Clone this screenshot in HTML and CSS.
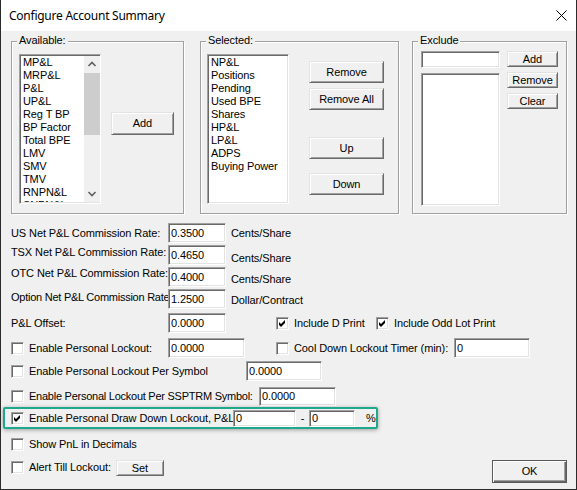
FILE: index.html
```html
<!DOCTYPE html>
<html>
<head>
<meta charset="utf-8">
<title>Configure Account Summary</title>
<link rel="stylesheet" href="styles.css">
</head>
<body>
<div class="window">
  <div class="titlebar">
    <span class="title">Configure Account Summary</span>
    <svg class="close" width="11" height="11" viewBox="0 0 11 11"><path d="M0.5 0.5L10.5 10.5M10.5 0.5L0.5 10.5" stroke="#000" stroke-width="1" fill="none"/></svg>
  </div>
  <div class="client">
    <div class="groups">
      <div class="group g-avail">
        <span class="legend">Available:</span>
        <div class="listbox lb-main">
          <div class="items">
            <div>MP&amp;L</div><div>MRP&amp;L</div><div>P&amp;L</div><div>UP&amp;L</div><div>Reg T BP</div><div>BP Factor</div><div>Total BPE</div><div>LMV</div><div>SMV</div><div>TMV</div><div>RNPN&amp;L</div><div>SNPN&amp;L</div>
          </div>
          <div class="scrollbar">
            <div class="sb-btn"><svg width="16" height="17" viewBox="0 0 16 17"><polyline points="4.5,10 8,6.5 11.5,10" fill="none" stroke="#606060" stroke-width="1.6"/></svg></div>
            <div class="sb-thumb"></div>
            <div class="sb-track"></div>
            <div class="sb-btn"><svg width="16" height="17" viewBox="0 0 16 17"><polyline points="4.5,7 8,10.5 11.5,7" fill="none" stroke="#606060" stroke-width="1.6"/></svg></div>
          </div>
        </div>
        <button class="btn btn-add">Add</button>
      </div>

      <div class="group g-sel">
        <span class="legend">Selected:</span>
        <div class="listbox lb-main">
          <div class="items">
            <div>NP&amp;L</div><div>Positions</div><div>Pending</div><div>Used BPE</div><div>Shares</div><div>HP&amp;L</div><div>LP&amp;L</div><div>ADPS</div><div>Buying Power</div>
          </div>
        </div>
        <div class="sel-btns">
          <button class="btn btn-sel">Remove</button>
          <button class="btn btn-sel b-rall">Remove All</button>
          <button class="btn btn-sel b-up">Up</button>
          <button class="btn btn-sel b-down">Down</button>
        </div>
      </div>

      <div class="group g-excl">
        <span class="legend">Exclude</span>
        <div class="excl-col">
          <input class="edit e-excl" type="text" value="">
          <div class="listbox lb-excl"></div>
        </div>
        <div class="excl-btns">
          <button class="btn btn-sm">Add</button>
          <button class="btn btn-sm">Remove</button>
          <button class="btn btn-sm">Clear</button>
        </div>
      </div>
    </div>

    <div class="fields">
      <div class="row r-us">
        <span class="lbl w-rate t3">US Net P&amp;L Commission Rate:</span>
        <input class="edit e-rate" type="text" value="0.3500">
        <span class="unit t3">Cents/Share</span>
      </div>
      <div class="row r-next">
        <span class="lbl w-rate t1">TSX Net P&amp;L Commission Rate:</span>
        <input class="edit e-rate" type="text" value="0.4650">
        <span class="unit t7">Cents/Share</span>
      </div>
      <div class="row r-next">
        <span class="lbl w-rate t0">OTC Net P&amp;L Commission Rate:</span>
        <input class="edit e-rate" type="text" value="0.4000">
        <span class="unit t6">Cents/Share</span>
      </div>
      <div class="row r-next">
        <span class="lbl w-rate t2 tight">Option Net P&amp;L Commission Rate</span>
        <input class="edit e-rate" type="text" value="1.2500">
        <span class="unit t4">Dollar/Contract</span>
      </div>

      <div class="row row-c r-offset">
        <span class="lbl w-rate">P&amp;L Offset:</span>
        <input class="edit e-rate" type="text" value="0.0000">
        <span class="cb w-dprint"><span class="chk"><svg width="11" height="11" viewBox="0 0 11 11"><polygon points="2,4 4,6 8,2 8,5 4,9 2,7" fill="#000"/></svg></span><span>Include D Print</span></span>
        <span class="cb"><span class="chk"><svg width="11" height="11" viewBox="0 0 11 11"><polygon points="2,4 4,6 8,2 8,5 4,9 2,7" fill="#000"/></svg></span><span>Include Odd Lot Print</span></span>
      </div>

      <div class="row row-c r-lock">
        <span class="cb w-rate"><span class="chk"></span><span>Enable Personal Lockout:</span></span>
        <input class="edit e-lock" type="text" value="0.0000">
        <span class="cb w-cool"><span class="chk"></span><span>Cool Down Lockout Timer (min):</span></span>
        <input class="edit e-cool" type="text" value="0">
      </div>

      <div class="row row-c r-sym">
        <span class="cb w-sym"><span class="chk"></span><span>Enable Personal Lockout Per Symbol</span></span>
        <input class="edit e-sym" type="text" value="0.0000">
      </div>

      <div class="row row-c r-ssp">
        <span class="cb w-ssp tight"><span class="chk"></span><span>Enable Personal Lockout Per SSPTRM Symbol:</span></span>
        <input class="edit e-ssp" type="text" value="0.0000">
      </div>

      <div class="row row-c r-draw">
        <span class="cb w-draw"><span class="chk"><svg width="11" height="11" viewBox="0 0 11 11"><polygon points="2,4 4,6 8,2 8,5 4,9 2,7" fill="#000"/></svg></span><span>Enable Personal Draw Down Lockout, P&amp;L</span></span>
        <input class="edit e-draw1" type="text" value="0">
        <span class="dash">-</span>
        <input class="edit e-draw2" type="text" value="0">
        <span class="pct">%</span>
      </div>

      <div class="row row-c r-show">
        <span class="cb"><span class="chk"></span><span>Show PnL in Decimals</span></span>
      </div>

      <div class="row r-alert">
        <span class="cb c-alert"><span class="chk"></span><span>Alert Till Lockout:</span></span>
        <button class="btn btn-set">Set</button>
        <button class="btn btn-ok">OK</button>
      </div>
    </div>
  </div>
</div>
</body>
</html>
```

FILE: styles.css
```css
* { box-sizing: border-box; }
html, body { margin: 0; padding: 0; }
body {
  width: 577px;
  height: 490px;
  overflow: hidden;
  background: #ffffff;
  color: #000;
  font-family: "Liberation Sans", Arial, sans-serif;
  font-size: 11px;
  letter-spacing: -0.1px;
  line-height: 13px;
}
.window {
  width: 577px;
  height: 490px;
  border: 1px solid #2b2b2b;
  border-top: none;
  background: #f0f0f0;
  display: flex;
  flex-direction: column;
}
.titlebar {
  flex: none;
  height: 31px;
  background: #ffffff;
  display: flex;
  align-items: center;
  padding-left: 8px;
}
.title {
  font-family: "Noto Sans", "Open Sans", sans-serif;
  font-size: 12px;
  letter-spacing: -0.25px;
  color: #000;
}
.close { margin-left: auto; margin-right: 9px; display: block; }
.client {
  flex: 1;
  padding: 10px 9px 0 10px;
}

/* group boxes */
.groups { display: flex; height: 173px; }
.group {
  position: relative;
  height: 173px;
  border: 1px solid #a0a0a0;
  box-shadow: inset 1px 1px 0 #ffffff, 1px 1px 0 #ffffff;
  display: flex;
  align-items: flex-start;
}
.legend {
  position: absolute;
  top: -8px;
  left: 5px;
  padding: 0 2px;
  background: #f0f0f0;
  line-height: 13px;
}
.g-avail { width: 173px; margin-right: 16px; padding: 12px 0 0 7px; }
.g-sel { width: 199px; margin-right: 13px; padding: 12px 0 0 6px; }
.g-excl { width: 155px; padding: 9px 0 0 8px; }

/* list boxes */
.listbox {
  background: #ffffff;
  border: 1px solid;
  border-color: #a0a0a0 #ffffff #ffffff #a0a0a0;
  box-shadow: inset 1px 1px 0 #696969, inset -1px -1px 0 #e3e3e3;
  overflow: hidden;
}
.lb-main {
  width: 82px;
  height: 150px;
  padding: 1px 0 1px 1px;
  display: flex;
}
.items { flex: 1; overflow: hidden; padding-left: 2px; white-space: nowrap; }
.items div { height: 13px; line-height: 13px; }
.scrollbar {
  flex: none;
  width: 16px;
  background: #f0f0f0;
  display: flex;
  flex-direction: column;
}
.sb-btn { height: 17px; flex: none; }
.sb-btn svg { display: block; }
.sb-thumb { height: 62px; background: #cdcdcd; flex: none; }
.sb-track { flex: 1; }
.lb-excl { width: 79px; height: 133px; margin-top: 5px; }

/* buttons */
.btn {
  font: inherit;
  letter-spacing: inherit;
  color: #000;
  background: #f0f0f0;
  border: 1px solid;
  border-color: #e3e3e3 #696969 #696969 #e3e3e3;
  box-shadow: inset 1px 1px 0 #ffffff, inset -1px -1px 0 #a0a0a0;
  padding: 0;
  margin: 0;
  display: flex;
  align-items: center;
  justify-content: center;
  flex: none;
}
.btn-add { width: 63px; height: 23px; margin: 58px 0 0 10px; }
.sel-btns { display: flex; flex-direction: column; margin: 7px 0 0 20px; }
.btn-sel { width: 75px; height: 22px; }
.b-rall { margin-top: 5px; }
.b-up { margin-top: 27px; }
.b-down { margin-top: 14px; }
.excl-col { display: flex; flex-direction: column; width: 79px; }
.excl-btns { display: flex; flex-direction: column; gap: 5px; margin-left: 7px; }
.btn-sm { width: 51px; height: 16px; }

/* edits */
.edit {
  font: inherit;
  letter-spacing: inherit;
  color: #000;
  background: #ffffff;
  border: 1px solid;
  border-color: #a0a0a0 #ffffff #ffffff #a0a0a0;
  box-shadow: inset 1px 1px 0 #696969, inset -1px -1px 0 #e3e3e3;
  padding: 0 2px;
  margin: 0;
  outline: none;
  flex: none;
}
.e-excl { width: 79px; height: 17px; }
.e-rate { width: 58px; height: 20px; }
.e-lock { width: 77px; height: 20px; }
.e-cool { width: 76px; height: 20px; }
.e-sym { width: 76px; height: 20px; }
.e-ssp { width: 77px; height: 19px; }
.e-draw1 { width: 63px; height: 17px; }
.e-draw2 { width: 46px; height: 17px; }

/* rows */
.fields { display: flex; flex-direction: column; }
.row { display: flex; align-items: flex-start; height: 20px; flex: none; }
.row-c { align-items: center; }
.r-us { margin-top: 9px; }
.r-next { margin-top: 2px; }
.r-offset { margin-top: 4px; }
.r-lock { margin-top: 5px; }
.r-sym { margin-top: 3px; }
.r-ssp { margin-top: 5px; }
.r-draw {
  margin-top: 1px;
  margin-left: -8px;
  width: 375px;
  height: 22px;
  padding-left: 6px;
  border: 2px solid #1ea88c;
  border-radius: 2px;
  box-shadow: 0 1px 4px rgba(0, 0, 0, 0.35);
}
.r-show { margin-top: 5px; }
.r-alert { margin-top: 3px; }

.lbl, .unit { white-space: nowrap; flex: none; }
.w-rate { width: 157px; }
.tight { letter-spacing: -0.25px; }
.unit { margin-left: 5px; }
.t0 { margin-top: 0; }
.t1 { margin-top: 1px; }
.t2 { margin-top: 2px; }
.t3 { margin-top: 4px; }
.t4 { margin-top: 5px; }
.t6 { margin-top: 6px; }
.t7 { margin-top: 7px; }

/* checkboxes */
.cb { display: flex; align-items: center; white-space: nowrap; flex: none; }
.chk {
  width: 13px;
  height: 13px;
  margin-right: 5px;
  background: #ffffff;
  border: 1px solid;
  border-color: #a0a0a0 #ffffff #ffffff #a0a0a0;
  box-shadow: inset 1px 1px 0 #696969, inset -1px -1px 0 #e3e3e3;
  flex: none;
}
.chk svg { display: block; }
.w-dprint { width: 100px; margin-left: 50px; }
.w-cool { width: 178px; margin-left: 31px; }
.w-sym { width: 235px; }
.w-ssp { width: 248px; }
.w-draw { width: 222px; }
.dash { width: 13px; text-align: center; flex: none; }
.pct { margin-left: 11px; flex: none; }
.c-alert { margin-top: 4px; }
.btn-set { width: 48px; height: 16px; margin: 3px 0 0 5px; }
.btn-ok { width: 75px; height: 23px; margin: 3px 0 0 auto;
  border-color: #5a5a5a;
  box-shadow: inset 1px 1px 0 #ffffff, inset -1px -1px 0 #696969, inset -2px -2px 0 #a0a0a0;
}
```
